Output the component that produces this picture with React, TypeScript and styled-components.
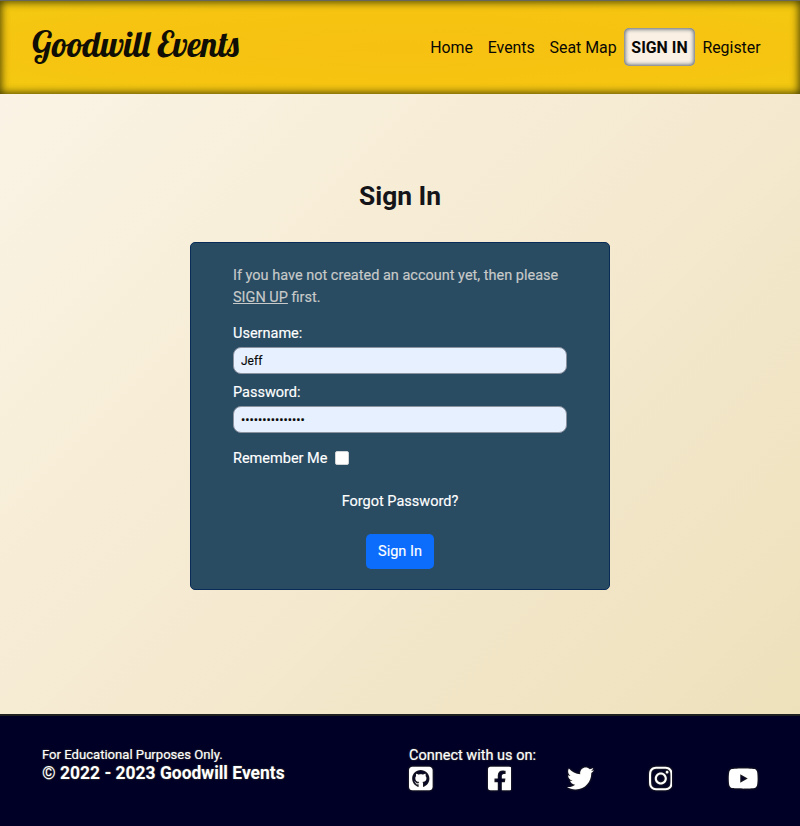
import React from "react";
import styled, { createGlobalStyle } from "styled-components";
import { FaSquareGithub, FaTwitter, FaInstagram, FaYoutube } from "react-icons/fa6";
import { FaFacebookSquare } from "react-icons/fa";

const GlobalStyle = createGlobalStyle`
  *, *::before, *::after { box-sizing: border-box; }
  body { margin: 0; font-family: Roboto, "Liberation Sans", sans-serif; color: #151519; overflow: hidden; }
`;

const Page = styled.div`
  display: flex;
  flex-direction: column;
  height: 826px;
  background: linear-gradient(135deg, #fbf4e8 0%, #f8efda 28%, #f5e9d0 52%, #f1e5c6 72%, #ece0b8 100%);
`;

const Header = styled.header`
  display: flex;
  align-items: center;
  justify-content: space-between;
  height: 94px;
  flex: none;
  padding: 0 32px 0 32px;
  border-top: 1px solid #66665f;
  background: radial-gradient(ellipse at center, #f7c112 0%, #f6c411 60%, #f3ca10 100%);
  box-shadow: inset 0 0 8px 1px #3d3900;
`;

const Brand = styled.a`
  width: 209px;
  margin-top: -8px;
  font: 400 34.8px/44px Lobster, "Liberation Serif", serif;
  white-space: nowrap;
  color: #100e05;
`;

const Nav = styled.nav`
  display: flex;
  align-items: center;
  margin-top: -1px;
`;

const NavLink = styled.a<{ $active?: boolean }>`
  display: flex;
  align-items: center;
  justify-content: center;
  height: 38px;
  padding: 0 7.4px;
  font-size: 15.9px;
  white-space: nowrap;
  color: #090804;
  ${({ $active }) =>
    $active &&
    `
    width: 71px;
    padding: 0;
    font-weight: 700;
    border-radius: 5px;
    background: #faf1e4;
    box-shadow: inset 0 0 4px 1px #4c5968;
  `}
`;

const Main = styled.main`
  flex: 1;
  display: flex;
  flex-direction: column;
  align-items: center;
  padding-top: 86px;
`;

const Title = styled.h1`
  margin: 0 0 30px;
  font-size: 26.4px;
  line-height: 32px;
  font-weight: 700;
`;

const Card = styled.form`
  display: flex;
  flex-direction: column;
  width: 420px;
  height: 348px;
  padding: 22px 42px 0;
  border: 1px solid #092b57;
  border-radius: 5px;
  background: #294c63;
  color: #fff;
  font-size: 14.5px;
  -webkit-text-stroke: 0.15px currentColor;
`;

const Hint = styled.p`
  margin: 0 0 14px;
  line-height: 22px;
  color: #c8cac9;
`;

const HintLink = styled.a`
  text-decoration: underline;
`;

const Label = styled.label`
  line-height: 22px;
  margin-bottom: 2px;
`;

const Field = styled.input`
  width: 334px;
  height: 27px;
  margin: 0 0 8px;
  padding: 1px 7px;
  border: 1px solid #8b929f;
  border-radius: 8px;
  outline: none;
  background: #e7f0fe;
  color: #080808;
  font: 12px Roboto, sans-serif;
  &[type="password"] { font-size: 12.6px; }
`;

const RememberRow = styled.label`
  display: flex;
  align-items: center;
  gap: 8px;
  height: 22px;
  margin: 6px 0 22px;
`;

const CheckBox = styled.input`
  appearance: none;
  width: 14px;
  height: 14px;
  margin: 0;
  border: 1px solid #d0d4d8;
  border-radius: 2px;
  background: #fff;
`;

const Forgot = styled.a`
  align-self: center;
  line-height: 22px;
`;

const Submit = styled.button`
  align-self: center;
  width: 68px;
  height: 35px;
  margin-top: 21px;
  padding: 0;
  border: 0;
  border-radius: 5px;
  background: #0c6dfd;
  color: #fff;
  font: 14.5px Roboto, sans-serif;
`;

const Footer = styled.footer`
  display: flex;
  justify-content: space-between;
  height: 112px;
  flex: none;
  padding: 30px 42px 0;
  border-top: 2px solid #1e211f;
  background: #000026;
  color: #fff;
  text-shadow: 0 0 2px #55553a;
`;

const Legal = styled.div`
  font-size: 13.1px;
  line-height: 17px;
  -webkit-text-stroke: 0.15px currentColor;
`;

const Copyright = styled.div`
  font-size: 17.45px;
  line-height: 20px;
  font-weight: 700;
`;

const Social = styled.div`
  width: 349px;
  padding-top: 1px;
  font-size: 14.5px;
  line-height: 17px;
  -webkit-text-stroke: 0.15px currentColor;
`;

const SocialIcons = styled.div`
  display: flex;
  justify-content: space-between;
  margin-top: 1px;
`;

const SocialLink = styled.a<{ $width: number }>`
  display: flex;
  svg {
    width: ${({ $width }) => $width}px;
    height: 27px;
    filter: drop-shadow(0 0 1px #3c3b23);
  }
`;

const socialIcons = [
  { Icon: FaSquareGithub, width: 23.6 },
  { Icon: FaFacebookSquare, width: 23.6 },
  { Icon: FaTwitter, width: 27 },
  { Icon: FaInstagram, width: 23.6 },
  { Icon: FaYoutube, width: 30.4 },
];

export default function App() {
  return (
    <Page>
      <GlobalStyle />
      <Header>
        <Brand>Goodwill Events</Brand>
        <Nav>
          <NavLink>Home</NavLink>
          <NavLink>Events</NavLink>
          <NavLink>Seat Map</NavLink>
          <NavLink $active>SIGN IN</NavLink>
          <NavLink>Register</NavLink>
        </Nav>
      </Header>
      <Main>
        <Title>Sign In</Title>
        <Card>
          <Hint>
            If you have not created an account yet, then please <HintLink>SIGN UP</HintLink> first.
          </Hint>
          <Label htmlFor="username">Username:</Label>
          <Field id="username" defaultValue="Jeff" />
          <Label htmlFor="password">Password:</Label>
          <Field id="password" type="password" defaultValue="goodwillevents1" />
          <RememberRow>
            Remember Me
            <CheckBox type="checkbox" />
          </RememberRow>
          <Forgot>Forgot Password?</Forgot>
          <Submit type="button">Sign In</Submit>
        </Card>
      </Main>
      <Footer>
        <div>
          <Legal>For Educational Purposes Only.</Legal>
          <Copyright>© 2022 - 2023 Goodwill Events</Copyright>
        </div>
        <Social>
          Connect with us on:
          <SocialIcons>
            {socialIcons.map(({ Icon, width }, i) => (
              <SocialLink key={i} $width={width}>
                <Icon />
              </SocialLink>
            ))}
          </SocialIcons>
        </Social>
      </Footer>
    </Page>
  );
}
